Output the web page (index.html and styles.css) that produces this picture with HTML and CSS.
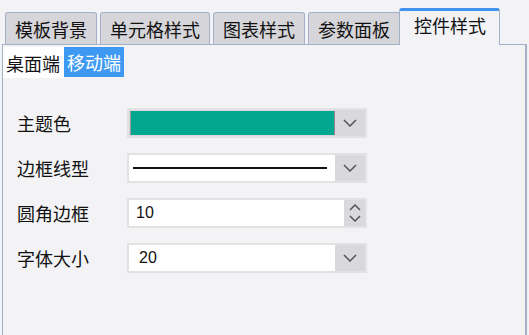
FILE: index.html
```html
<!DOCTYPE html>
<html lang="zh-CN">
<head>
<meta charset="utf-8">
<title>控件样式</title>
<link rel="stylesheet" href="styles.css">
</head>
<body>
<div class="tabs">
  <div class="tab">模板背景</div>
  <div class="tab">单元格样式</div>
  <div class="tab">图表样式</div>
  <div class="tab">参数面板</div>
  <div class="tab active">控件样式</div>
</div>
<div class="panel">
  <div class="subtabs">
    <div class="subtab">桌面端</div>
    <div class="subtab selected">移动端</div>
  </div>
  <div class="form">
    <div class="row">
      <div class="label">主题色</div>
      <div class="combo">
        <div class="field color-field"><div class="swatch"></div></div>
        <div class="btn"><svg width="14" height="8" viewBox="0 0 14 8"><path d="M1 1 L7 7 L13 1" fill="none" stroke="#555" stroke-width="1.5"/></svg></div>
      </div>
    </div>
    <div class="row">
      <div class="label">边框线型</div>
      <div class="combo">
        <div class="field line-field"><div class="line"></div></div>
        <div class="btn"><svg width="14" height="8" viewBox="0 0 14 8"><path d="M1 1 L7 7 L13 1" fill="none" stroke="#555" stroke-width="1.5"/></svg></div>
      </div>
    </div>
    <div class="row">
      <div class="label">圆角边框</div>
      <div class="combo">
        <div class="field text-field">10</div>
        <div class="spin">
          <svg width="12" height="7" viewBox="0 0 12 7"><path d="M1 6 L6 1 L11 6" fill="none" stroke="#555" stroke-width="1.5"/></svg>
          <svg width="12" height="7" viewBox="0 0 12 7"><path d="M1 1 L6 6 L11 1" fill="none" stroke="#555" stroke-width="1.5"/></svg>
        </div>
      </div>
    </div>
    <div class="row">
      <div class="label">字体大小</div>
      <div class="combo">
        <div class="field text-field num2">20</div>
        <div class="btn"><svg width="14" height="8" viewBox="0 0 14 8"><path d="M1 1 L7 7 L13 1" fill="none" stroke="#555" stroke-width="1.5"/></svg></div>
      </div>
    </div>
  </div>
</div>
</body>
</html>
```
FILE: styles.css
```css
html, body {
  margin: 0;
  padding: 0;
  background: #f3f3f6;
  height: 100%;
  overflow: hidden;
}
body {
  font-family: "Noto Sans CJK SC", "Microsoft YaHei", sans-serif;
  font-size: 18px;
  color: #111;
}
.tabs {
  display: flex;
  align-items: flex-end;
  height: 45px;
  padding-left: 5px;
  box-sizing: border-box;
}
.tab {
  height: 32px;
  box-sizing: border-box;
  padding: 0 9px;
  margin-right: 3px;
  display: flex;
  align-items: center;
  background: #d6d6da;
  border: 1px solid #a3b1c6;
  border-bottom: none;
  border-radius: 3px 3px 0 0;
  line-height: 1;
  margin-bottom: 1px;
}
.tab.active {
  height: 37px;
  margin-right: 0;
  margin-left: -4px;
  margin-bottom: 0;
  padding: 0 13px 0 14px;
  background: #f3f3f6;
  border-top: 3px solid #3f93ee;
  border-radius: 3px 3px 0 0;
  position: relative;
  z-index: 1;
  align-items: flex-start;
  padding-top: 5px;
}
.panel {
  margin: -1px 2px 0 2px;
  border: 1px solid #a3b1c6;
  border-right: 2px solid #a3b1c6;
  border-bottom: none;
  height: 300px;
}
.subtabs {
  display: flex;
  margin-top: 2px;
}
.subtab {
  height: 31px;
  padding: 0 3px;
  width: 61px;
  box-sizing: border-box;
  display: flex;
  align-items: center;
  background: #fff;
  line-height: 1;
}
.subtab.selected {
  background: #3d99f2;
  color: #fff;
  width: 60px;
  height: 30px;
}
.form {
  padding: 30px 0 0 14px;
  display: flex;
  flex-direction: column;
  gap: 16px;
}
.row {
  display: flex;
  align-items: center;
  height: 30px;
}
.row + .row { margin-top: -1px; }
.label {
  width: 110px;
  line-height: 1;
}
.combo {
  width: 240px;
  height: 30px;
  box-sizing: border-box;
  border: 2px solid #e2e2e5;
  display: flex;
  background: #d9d9dd;
}
.field {
  flex: 1;
  background: #fff;
  display: flex;
  align-items: center;
}
.color-field {
  background: #dadade;
  padding: 1px 0 1px 1px;
  box-sizing: border-box;
}
.swatch {
  height: 100%;
  width: 100%;
  background: #03a78f;
  border-left: 1px solid #9a9a9a;
  border-right: 1px solid #8a8a8a;
  box-sizing: border-box;
}
.line-field {
  padding: 0 8px 0 4px;
}
.line {
  height: 2px;
  width: 100%;
  background: #111;
}
.text-field {
  font-family: "Liberation Sans", Arial, sans-serif;
  font-size: 16px;
  padding-left: 7px;
}
.num2 { padding-left: 10px; }
.btn {
  width: 30px;
  display: flex;
  align-items: center;
  justify-content: center;
}
.spin {
  width: 21px;
  display: flex;
  flex-direction: column;
  align-items: center;
  justify-content: center;
  gap: 4px;
}
```
